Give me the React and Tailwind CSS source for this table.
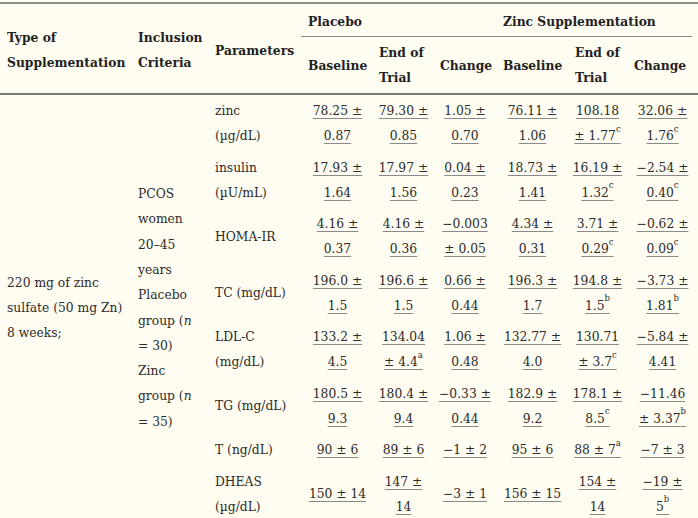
import React from 'react';

const rows = [
  { label: ['zinc', '(µg/dL)'], cells: ['78.25 ±|0.87', '79.30 ±|0.85', '1.05 ±|0.70', '76.11 ±|1.06', '108.18|± 1.77^c', '32.06 ±|1.76^c'] },
  { label: ['insulin', '(µU/mL)'], cells: ['17.93 ±|1.64', '17.97 ±|1.56', '0.04 ±|0.23', '18.73 ±|1.41', '16.19 ±|1.32^c', '−2.54 ±|0.40^c'] },
  { label: ['HOMA-IR'], cells: ['4.16 ±|0.37', '4.16 ±|0.36', '−0.003|± 0.05', '4.34 ±|0.31', '3.71 ±|0.29^c', '−0.62 ±|0.09^c'] },
  { label: ['TC (mg/dL)'], cells: ['196.0 ±|1.5', '196.6 ±|1.5', '0.66 ±|0.44', '196.3 ±|1.7', '194.8 ±|1.5^b', '−3.73 ±|1.81^b'] },
  { label: ['LDL-C', '(mg/dL)'], cells: ['133.2 ±|4.5', '134.04|± 4.4^a', '1.06 ±|0.48', '132.77 ±|4.0', '130.71|± 3.7^c', '−5.84 ±|4.41'] },
  { label: ['TG (mg/dL)'], cells: ['180.5 ±|9.3', '180.4 ±|9.4', '−0.33 ±|0.44', '182.9 ±|9.2', '178.1 ±|8.5^c', '−11.46|± 3.37^b'] },
  { label: ['T (ng/dL)'], cells: ['90 ± 6', '89 ± 6', '−1 ± 2', '95 ± 6', '88 ± 7^a', '−7 ± 3'] },
  { label: ['DHEAS', '(µg/dL)'], cells: ['150 ± 14', '147 ±|14', '−3 ± 1', '156 ± 15', '154 ±|14', '−19 ±|5^b'] },
];

// one line of a value, with an optional superscript letter after "^"
const ValueLine = ({ text }) => {
  const [main, sup] = text.split('^');
  return (
    <div>
      <span className="underline decoration-[#8a8a8a] decoration-1 underline-offset-[3px]">
        {main}
        {sup && <sup className="text-[8.5px] align-[4px] leading-none">{sup}</sup>}
      </span>
    </div>
  );
};

const App = () => {
  const cellText = 'align-middle leading-[25px]';

  return (
    <div className="w-[698px] h-[518px] overflow-hidden bg-[#fffdf2] text-[#2b2b2b] text-[12.3px]" style={{ fontFamily: '"DejaVu Serif", serif' }}>
      <div className="h-[2px]" />
      <table className="w-[698px] table-fixed border-collapse">
        <colgroup>
          <col className="w-[132px]" />
          <col className="w-[78px]" />
          <col className="w-[91px]" />
          <col className="w-[73px]" />
          <col className="w-[59px]" />
          <col className="w-[64px]" />
          <col className="w-[71px]" />
          <col className="w-[59px]" />
          <col className="w-[71px]" />
        </colgroup>
        <thead className="font-bold text-[#222]">
          <tr className="border-t-2 border-[#8a8a8a]">
            <th rowSpan={2} className={`${cellText} text-left pl-[7px] pr-1 pt-[3px]`}>
              Type of<br />Supplementation
            </th>
            <th rowSpan={2} className={`${cellText} text-left pl-[6px] pr-1 pt-[3px]`}>
              Inclusion<br />Criteria
            </th>
            <th rowSpan={2} className={`${cellText} text-left pl-[5px] pr-1 pt-[3px]`}>
              Parameters
            </th>
            <th colSpan={3} className="p-0 align-bottom text-left">
              <div className="pl-[7px] leading-[25px] pt-[5px] pb-[2px] border-b border-[#8a8a8a]">Placebo</div>
            </th>
            <th colSpan={3} className="p-0 align-bottom text-left">
              <div className="pl-[6px] mr-[6px] leading-[25px] pt-[5px] pb-[2px] border-b border-[#8a8a8a]">
                Zinc Supplementation
              </div>
            </th>
          </tr>
          <tr className="border-b-2 border-[#7a7a7a]">
            <th className={`${cellText} text-left pl-[7px] py-[3px]`}>Baseline</th>
            <th className={`${cellText} text-left pl-[5px] py-[3px]`}>End of<br />Trial</th>
            <th className={`${cellText} text-left pl-[7px] py-[3px]`}>Change</th>
            <th className={`${cellText} text-left pl-[6px] py-[3px]`}>Baseline</th>
            <th className={`${cellText} text-left pl-[7px] py-[3px]`}>End of<br />Trial</th>
            <th className={`${cellText} text-left pl-[7px] py-[3px]`}>Change</th>
          </tr>
        </thead>
        <tbody>
          {rows.map((row, i) => (
            <tr key={i}>
              {i === 0 && (
                <>
                  <td rowSpan={rows.length} className={`${cellText} pl-[7px] pr-1`}>
                    220 mg of zinc<br />sulfate (50 mg Zn)<br />8 weeks;
                  </td>
                  <td rowSpan={rows.length} className="align-middle leading-[25.3px] pl-[6px] pr-1">
                    PCOS<br />women<br />20–45<br />years<br />Placebo<br />group (<i>n</i><br />= 30)<br />Zinc<br />group (<i>n</i><br />= 35)
                  </td>
                </>
              )}
              <td className={`${cellText} pl-[5px] pr-1 pt-[4px] pb-[2.5px]`}>
                {row.label.map((l, j) => (
                  <div key={j}>{l}</div>
                ))}
              </td>
              {row.cells.map((c, j) => (
                <td key={j} className={`${cellText} text-center px-[4px] pt-[4px] pb-[2.5px]`}>
                  {c.split('|').map((line, k) => (
                    <ValueLine key={k} text={line} />
                  ))}
                </td>
              ))}
            </tr>
          ))}
        </tbody>
      </table>
    </div>
  );
};

export default App;
